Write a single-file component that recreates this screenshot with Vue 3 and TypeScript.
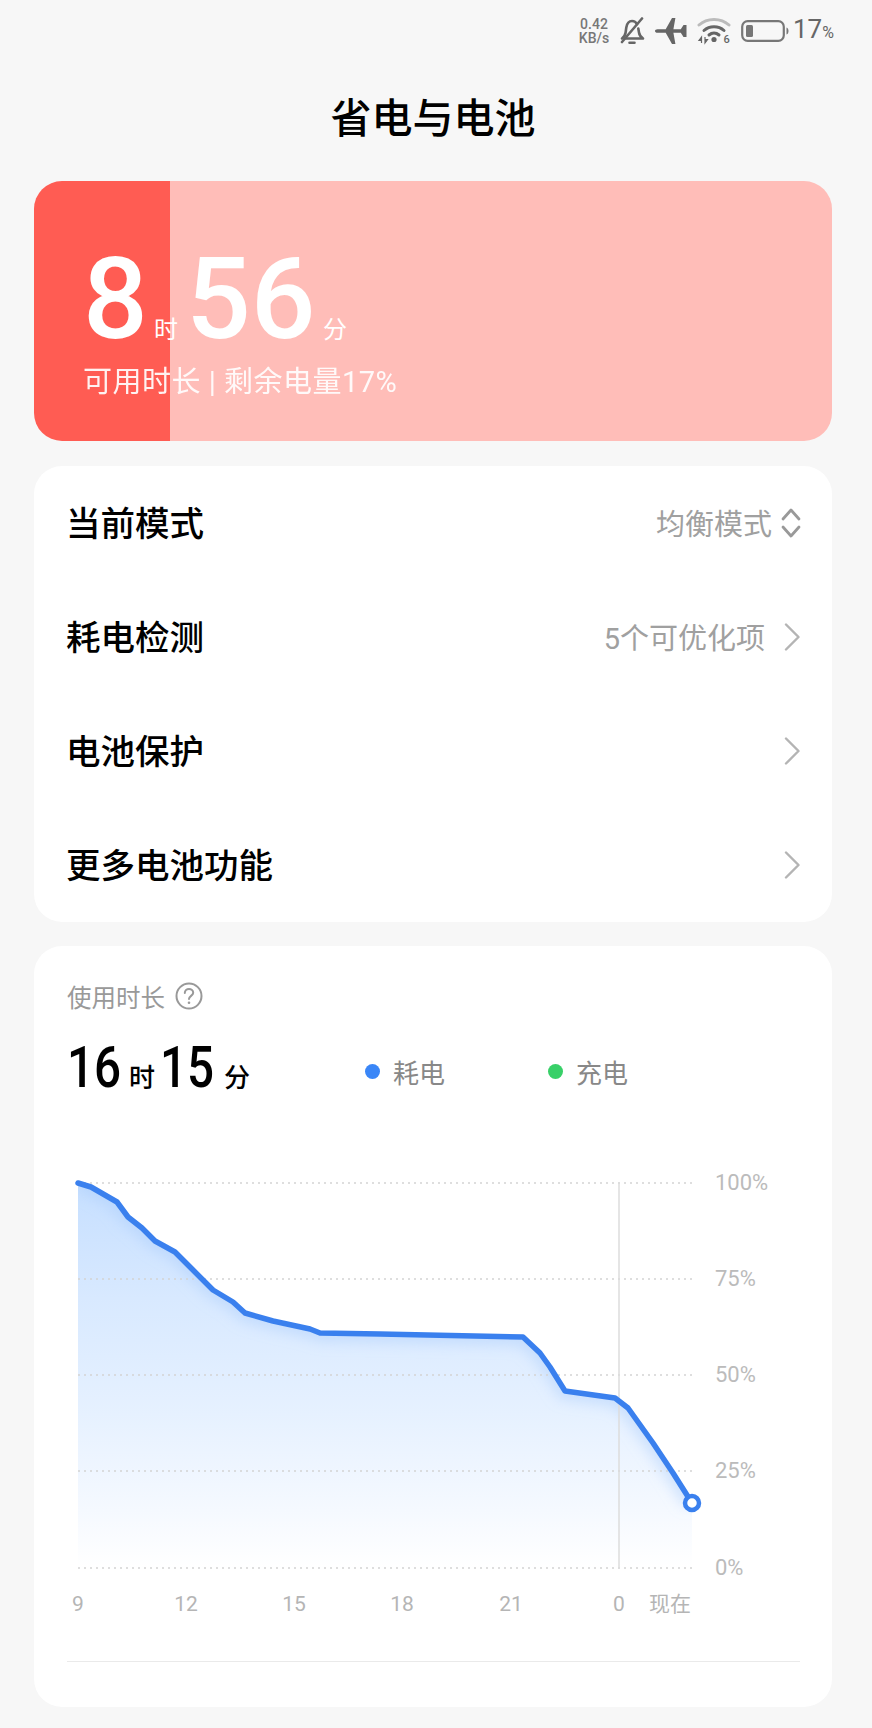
<script setup lang="ts">
interface Row { label: string; value?: string; icon: 'updown' | 'chevron' }
const rows: Row[] = [
  { label: '当前模式', value: '均衡模式', icon: 'updown' },
  { label: '耗电检测', value: '5个可优化项', icon: 'chevron' },
  { label: '电池保护', icon: 'chevron' },
  { label: '更多电池功能', icon: 'chevron' },
]
const pts: [number, number][] = [
  [78, 1183], [91, 1187], [117, 1202], [128, 1217], [142, 1228], [155, 1241], [175, 1252], [193, 1270],
  [213, 1290], [233, 1302], [245, 1313], [273, 1321], [310, 1329], [320, 1333], [380, 1334], [523, 1337],
  [540, 1353], [550, 1367], [565, 1391], [615, 1398], [628, 1408], [653, 1443], [673, 1473], [692, 1503],
]
const line = pts.map((p) => p.join(',')).join(' ')
const area = `${line} 692,1568 78,1568`
const grid = [
  { y: 1183, label: '100%' },
  { y: 1279, label: '75%' },
  { y: 1375, label: '50%' },
  { y: 1471, label: '25%' },
  { y: 1568, label: '0%' },
]
const hours = [
  { x: 78, t: '9' },
  { x: 186, t: '12' },
  { x: 294, t: '15' },
  { x: 402, t: '18' },
  { x: 511, t: '21' },
  { x: 619, t: '0' },
]
</script>

<template>
  <div class="page">
    <div class="status">
      <div class="speed"><span>0.42</span><span>KB/s</span></div>
      <svg class="ic bell" viewBox="0 0 26 28" fill="none" stroke="#666" stroke-width="2.6" stroke-linejoin="round" stroke-linecap="round">
        <path d="M3 21.500c2-1.500 3.200-3 3.600-6l.7-5C8 6.500 10.200 4 13 4c2.200 0 4 1.200 5 3.200M19.300 11.500l.7 4c.4 3 2 4.500 4 6H7" />
        <path d="M10.500 25.800h5M23 1.500 3 25" />
      </svg>
      <svg class="ic plane" viewBox="0 0 32 28" fill="#666">
        <path d="M0 14c0-1 1-1.800 2.500-1.800h8.200L17 1h3.400l-2 11.200h7.400L28.500 8H31.500v12h-3l-2.700-4.200h-7.400l2 11.200H17l-6.300-11.200H2.500C1 15.800 0 15 0 14Z" />
      </svg>
      <svg class="ic wifi" viewBox="0 0 34 30">
        <path d="M2 9C10 1.500 24 1.500 32 9" fill="none" stroke="#bbb" stroke-width="3" stroke-linecap="round" />
        <path d="M7 14.500C12.500 9.500 21.500 9.500 27 14.500" fill="none" stroke="#666" stroke-width="3" stroke-linecap="round" />
        <path d="M12 19c3-2.600 7-2.600 10 0" fill="none" stroke="#666" stroke-width="3" stroke-linecap="round" />
        <circle cx="17" cy="23.500" r="2.600" fill="#666" />
        <path d="M4.500 21v6M4.500 21l-2.500 3.500h2.500ZM8 27v-6M8 27l2.500-3.500H8Z" stroke="#666" stroke-width="1.200" fill="#666" />
        <text x="26.500" y="27" class="six">6</text>
      </svg>
      <svg class="ic battery" viewBox="0 0 48 22" fill="none">
        <rect x="1.200" y="1.200" width="41.600" height="19.600" rx="5.500" stroke="#777" stroke-width="2.200" />
        <rect x="5" y="5" width="7" height="12" rx="1.500" fill="#777" />
        <path d="M45.500 7.500c1.500.5 2 2 2 3.500s-.5 3-2 3.500Z" fill="#777" />
      </svg>
      <div class="pct">17<small>%</small></div>
    </div>

    <h1 class="title">省电与电池</h1>

    <section class="hero">
      <div class="big">
        <span class="n8">8</span><span class="u u1">时</span><span class="n56">56</span><span class="u u2">分</span>
      </div>
      <div class="sub">可用时长 | 剩余电量17%</div>
    </section>

    <section class="card menu">
      <div v-for="r in rows" :key="r.label" class="row">
        <span class="label">{{ r.label }}</span>
        <span class="right">
          <span v-if="r.value" class="value" :class="{ tight: r.icon === 'updown' }">{{ r.value }}</span>
          <svg v-if="r.icon === 'updown'" class="updown" viewBox="0 0 20 34" fill="none" stroke="#999" stroke-width="2.800" stroke-linecap="round" stroke-linejoin="round">
            <path d="M2 13 10 4l8 9M2 21l8 9 8-9" />
          </svg>
          <svg v-else class="chev" viewBox="0 0 16 28" fill="none" stroke="#b4b4b4" stroke-width="2.400" stroke-linecap="round" stroke-linejoin="round">
            <path d="M2 1.500 14.500 14 2 26.500" />
          </svg>
        </span>
      </div>
    </section>

    <section class="card usage">
      <div class="u-head">
        <span>使用时长</span>
        <svg class="help" viewBox="0 0 28 28" fill="none" stroke="#999" stroke-width="2">
          <circle cx="14" cy="14" r="12.500" />
          <path d="M9.800 11c0-2.500 2-4 4.200-4s4.200 1.500 4.200 3.800c0 3-4.200 3.200-4.200 6.200" stroke-linecap="round" />
          <circle cx="14" cy="20.800" r="1.300" fill="#999" stroke="none" />
        </svg>
      </div>
      <div class="u-total">
        <div class="time">
          <b class="d1">16</b><span class="tu tu1">时</span><b class="d2">15</b><span class="tu tu2">分</span>
        </div>
        <div class="legend l1"><i class="dot blue"></i>耗电</div>
        <div class="legend l2"><i class="dot green"></i>充电</div>
      </div>
      <svg class="chart" viewBox="34 1160 798 470">
        <defs>
          <linearGradient id="fill" x1="0" y1="1183" x2="0" y2="1568" gradientUnits="userSpaceOnUse">
            <stop offset="0" stop-color="#c6dfff" />
            <stop offset="0.3" stop-color="#d8e9ff" />
            <stop offset="0.6" stop-color="#e6f1ff" />
            <stop offset="0.85" stop-color="#f5f9ff" />
            <stop offset="1" stop-color="#ffffff" />
          </linearGradient>
          <clipPath id="under"><polygon :points="area" /></clipPath>
          <filter id="glow" x="-10%" y="-10%" width="120%" height="120%"><feGaussianBlur stdDeviation="7" /></filter>
        </defs>
        <polygon :points="area" fill="url(#fill)" />
        <g clip-path="url(#under)">
          <polyline :points="line" fill="none" stroke="#a9ccfb" stroke-opacity="0.5" stroke-width="16" filter="url(#glow)" />
        </g>
        <line v-for="g in grid" :key="g.y" x1="78" :y1="g.y" x2="692" :y2="g.y" class="gridline" />
        <line x1="619" y1="1183" x2="619" y2="1568" class="now" />
        <polyline :points="line" fill="none" stroke="#3a80ee" stroke-width="5.500" stroke-linejoin="round" stroke-linecap="round" />
        <circle cx="692" cy="1503" r="7" fill="#fff" stroke="#3a80ee" stroke-width="4.500" />
        <text v-for="g in grid" :key="g.label" x="715" :y="g.y + 7" class="pctlabel">{{ g.label }}</text>
        <text v-for="h in hours" :key="h.t" :x="h.x" y="1611" text-anchor="middle" class="hour">{{ h.t }}</text>
        <text x="649" y="1611" class="hour">现在</text>
      </svg>
      <div class="divider"></div>
    </section>
  </div>
</template>

<style>
html, body { margin: 0; background: #f7f7f7; }
</style>

<style scoped>
.page {
  width: 872px;
  height: 1728px;
  overflow: hidden;
  box-sizing: border-box;
  padding: 0 40px 0 34px;
  background: #f7f7f7;
  font-family: Roboto, "Noto Sans CJK SC", sans-serif;
}
.status {
  height: 62px;
  display: flex;
  justify-content: flex-end;
  align-items: center;
  color: #666;
}
.speed {
  display: flex;
  flex-direction: column;
  align-items: center;
  width: 32px;
  font-size: 14px;
  line-height: 14px;
  font-weight: 500;
  color: #777;
  margin-right: 9px;
}
.ic { display: block; flex: none; }
.bell { width: 26px; height: 28px; margin-right: 10px; }
.plane { width: 32px; height: 28px; margin-right: 10px; }
.wifi { width: 34px; height: 30px; margin-right: 10px; }
.battery { width: 48px; height: 22px; margin-right: 4px; }
.six { font-size: 11px; fill: #666; font-weight: 500; }
.pct { font-size: 26px; line-height: 30px; color: #666; width: 39px; white-space: nowrap; }
.pct small { font-size: 16px; }
.title {
  margin: 0;
  height: 119px;
  box-sizing: border-box;
  padding-top: 31px;
  text-align: center;
  font-size: 41px;
  line-height: 52px;
  font-weight: 500;
  color: #000;
}
.hero {
  height: 260px;
  border-radius: 28px;
  background: linear-gradient(to right, #ff5c53 136px, #ffbdb8 136px);
  color: #fff;
  padding: 61px 0 0 50px;
  box-sizing: border-box;
  margin-bottom: 25px;
}
.big { height: 114px; display: flex; align-items: baseline; }
.n8 { font-size: 114px; line-height: 114px; font-weight: 500; width: 71px; margin-left: -1px; }
.u { font-size: 24px; line-height: 28px; }
.u1 { width: 32px; }
.n56 { font-size: 114px; line-height: 114px; font-weight: 500; width: 137px; }
.sub { font-size: 29px; line-height: 36px; margin-left: -1px; margin-top: 8px; opacity: 0.92; font-weight: 400; letter-spacing: 0.500px; white-space: nowrap; }
.card { background: #fff; border-radius: 28px; }
.menu { margin-bottom: 24px; }
.row {
  height: 114px;
  display: flex;
  align-items: center;
  justify-content: space-between;
  padding: 0 32px 0 32px;
}
.label { font-size: 34.500px; font-weight: 500; color: #000; padding-bottom: 4px; }
.right { display: flex; align-items: center; }
.value { font-size: 29px; color: #a0a0a0; margin-right: 19px; padding-bottom: 2px; }
.value.tight { margin-right: 9px; }
.chev { width: 16px; height: 28px; }
.updown { width: 20px; height: 34px; margin-right: -1px; }
.usage { height: 761px; position: relative; padding: 0 32px 0 33px; box-sizing: border-box; }
.u-head {
  height: 34px;
  padding-top: 33px;
  display: flex;
  align-items: center;
  font-size: 24.500px;
  color: #999;
}
.help { width: 28px; height: 28px; margin-left: 10px; }
.u-total { height: 72px; margin-top: 18px; position: relative; display: flex; align-items: center; }
.time { display: flex; align-items: baseline; color: #000; }
.time b { font-size: 58px; line-height: 72px; font-weight: 500; display: inline-block; transform: scaleX(0.82); transform-origin: left center; }
.tu { font-size: 26px; font-weight: 500; }
.d1 { width: 62px; }
.tu1 { width: 31px; }
.d2 { width: 64px; }
.legend { position: absolute; top: 4px; height: 72px; display: flex; align-items: center; font-size: 26px; color: #888; }
.l1 { left: 298px; }
.l2 { left: 481px; }
.dot { width: 15px; height: 15px; border-radius: 50%; margin-right: 13px; }
.blue { background: #3a86f7; }
.green { background: #38d068; }
.chart { position: absolute; left: 0; top: 214px; width: 798px; height: 470px; display: block; }
.gridline { stroke: #d4d4d4; stroke-width: 1.500; stroke-dasharray: 2 4; }
.now { stroke: #dcdcdc; stroke-width: 1.500; }
.pctlabel { font-size: 22px; fill: #bbb; }
.hour { font-size: 21px; fill: #b5b5b5; }
.divider { position: absolute; left: 33px; right: 32px; top: 715px; height: 1px; background: #eaeaea; }
</style>
